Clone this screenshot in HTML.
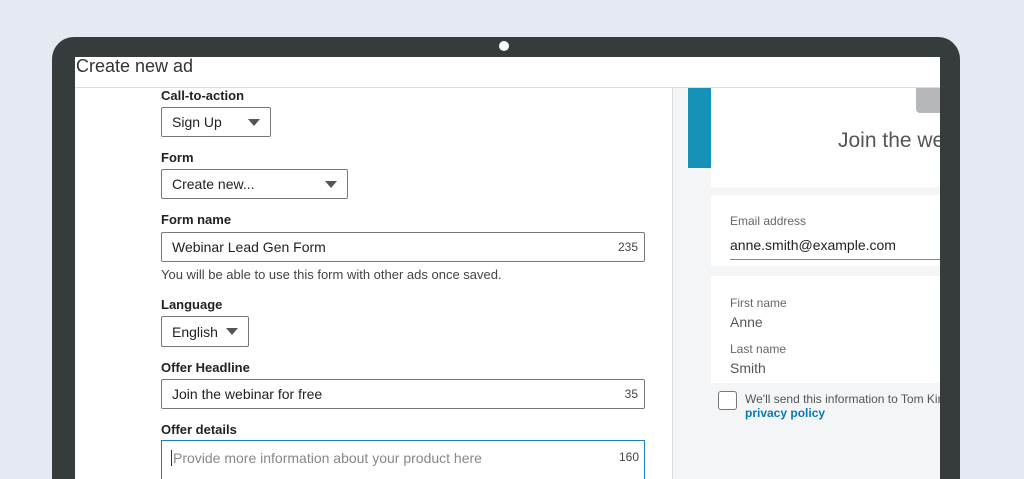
<!DOCTYPE html><html><head><style>
*{margin:0;padding:0;box-sizing:border-box}
html,body{width:1024px;height:479px;overflow:hidden}
body{background:#e4e9f2;position:relative;font-family:"Liberation Sans",sans-serif;color:#222}
.a{position:absolute}
.lab{position:absolute;left:161px;font-size:13px;font-weight:bold;color:#222}
.box{position:absolute;border:1px solid #777;border-radius:2px;background:#fff;font-size:14px;padding-left:10px;display:flex;align-items:center}
.tri{position:absolute;right:10px;top:11px;width:0;height:0;border-left:6px solid transparent;border-right:6px solid transparent;border-top:7px solid #555}
.cnt{position:absolute;right:6px;font-size:12px;color:#444}
.sm{font-size:12px;color:#666;position:absolute}
</style></head><body>
<div class="a" style="left:52px;top:37px;width:908px;height:442px;background:#363c3c;border-radius:22px 22px 0 0"></div>
<div class="a" style="left:499px;top:41px;width:10px;height:10px;border-radius:50%;background:#fff"></div>
<div class="a" style="left:75px;top:57px;width:865px;height:422px;background:#fff;overflow:hidden">
<div class="a" style="left:1px;top:-1px;font-size:18px;color:#333">Create new ad</div>
<div class="a" style="left:0;top:30px;width:865px;height:1px;background:#ddd"></div>
<div class="a" style="left:597px;top:31px;width:1px;height:400px;background:#ddd"></div>
<div class="a" style="left:598px;top:31px;width:267px;height:400px;background:#f3f5f7"></div>
<div class="a" style="left:613px;top:31px;width:23px;height:80px;background:#1592b5"></div>
<div class="a" style="left:636px;top:31px;width:229px;height:99px;background:#fff"></div>
<div class="a" style="left:841px;top:31px;width:30px;height:25px;background:#b5b7bb;border-radius:0 0 0 4px"></div>
<div class="a" style="left:763px;top:72px;font-size:21px;color:#555;white-space:nowrap">Join the webinar</div>
<div class="a" style="left:636px;top:138px;width:229px;height:71px;background:#fff"></div>
<div class="sm" style="left:655px;top:157px">Email address</div>
<div class="a" style="left:655px;top:180px;font-size:14px;color:#222">anne.smith@example.com</div>
<div class="a" style="left:655px;top:202px;width:210px;height:1px;background:#888"></div>
<div class="a" style="left:636px;top:219px;width:229px;height:107px;background:#fff"></div>
<div class="sm" style="left:655px;top:239px">First name</div>
<div class="a" style="left:655px;top:257px;font-size:14px;color:#555">Anne</div>
<div class="sm" style="left:655px;top:285px">Last name</div>
<div class="a" style="left:655px;top:303px;font-size:14px;color:#555">Smith</div>
<div class="a" style="left:643px;top:334px;width:19px;height:19px;border:1.5px solid #777;border-radius:3px;background:#fff"></div>
<div class="a" style="left:670px;top:335px;font-size:12px;color:#555;white-space:nowrap">We'll send this information to Tom Kim</div>
<div class="a" style="left:670px;top:349px;font-size:12px;color:#0a78b5;font-weight:bold">privacy policy</div>
</div>

<div class="lab" style="top:88px">Call-to-action</div>
<div class="box" style="left:161px;top:107px;width:110px;height:30px">Sign Up<div class="tri"></div></div>
<div class="lab" style="top:150px">Form</div>
<div class="box" style="left:161px;top:169px;width:187px;height:30px">Create new...<div class="tri"></div></div>
<div class="lab" style="top:212px">Form name</div>
<div class="box" style="left:161px;top:232px;width:484px;height:30px">Webinar Lead Gen Form<span class="cnt">235</span></div>
<div class="a" style="left:161px;top:267px;font-size:13px;color:#444">You will be able to use this form with other ads once saved.</div>
<div class="lab" style="top:297px">Language</div>
<div class="box" style="left:161px;top:316px;width:88px;height:31px">English<div class="tri"></div></div>
<div class="lab" style="top:360px">Offer Headline</div>
<div class="box" style="left:161px;top:379px;width:484px;height:30px">Join the webinar for free<span class="cnt">35</span></div>
<div class="lab" style="top:422px">Offer details</div>
<div class="a" style="left:161px;top:440px;width:484px;height:50px;border:1.5px solid #1a7fc0;background:#fff"></div>
<div class="a" style="left:171px;top:450px;font-size:14px;color:#888;border-left:1px solid #333;padding-left:1px">Provide more information about your product here</div>
<div class="a" style="left:619px;top:450px;font-size:12px;color:#444">160</div>
</body></html>
